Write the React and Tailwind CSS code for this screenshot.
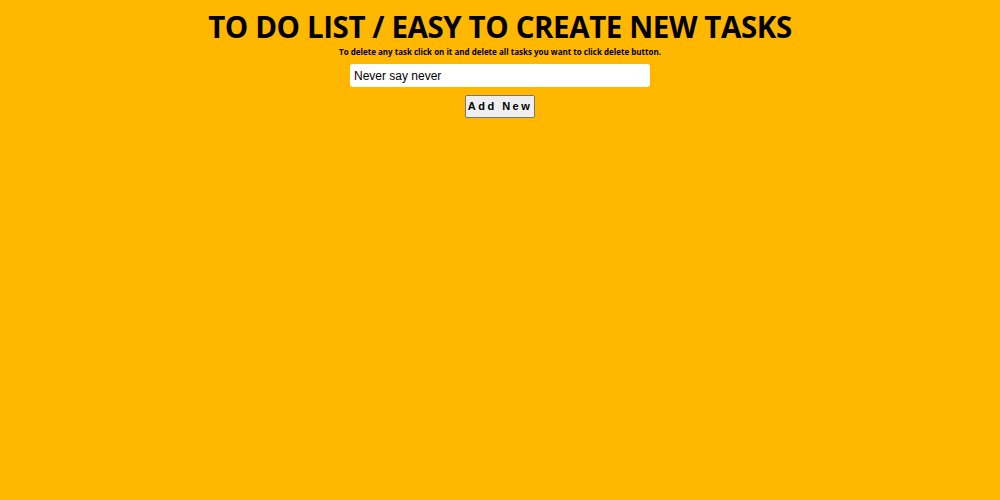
import React, { useState } from 'react';

const App = () => {
  const [task, setTask] = useState('Never say never');

  return (
    <div className="min-h-screen w-full bg-[#ffb700] flex flex-col items-center pt-[9px]">
      <h1 className="text-[29.5px] leading-[36px] font-bold text-black font-['Open_Sans',sans-serif] tracking-[-0.4px]">
        TO DO LIST / EASY TO CREATE NEW TASKS
      </h1>
      <p className="mt-[1px] text-[8px] leading-[12px] font-bold text-black font-['Open_Sans',sans-serif]">
        To delete any task click on it and delete all tasks you want to click delete button.
      </p>
      <input
        type="text"
        value={task}
        onChange={(e) => setTask(e.target.value)}
        className="mt-[6px] w-[300px] h-[23px] bg-white rounded-[3px] px-[4px] text-[12px] text-black font-['Liberation_Sans',Arial,sans-serif] outline-none"
      />
      <button
        type="button"
        className="mt-[8px] w-[70px] h-[23px] bg-[#efefef] border border-[#767676] rounded-[2px] text-[11px] font-bold tracking-[2.5px] text-black font-['Liberation_Sans',Arial,sans-serif]"
      >
        Add New
      </button>
    </div>
  );
};

export default App;
